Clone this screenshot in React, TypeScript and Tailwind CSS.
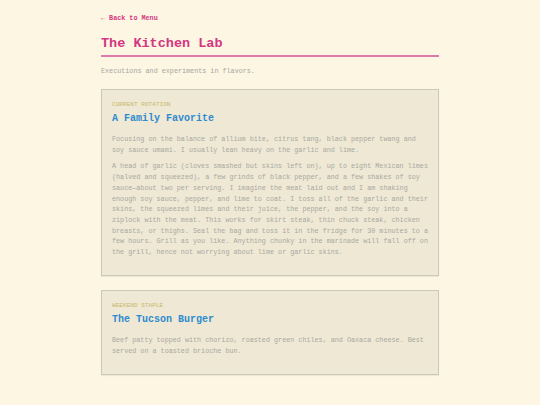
import React from 'react';

interface Recipe {
  tag: string;
  title: string;
  paragraphs: string[];
}

const recipes: Recipe[] = [
  {
    tag: 'Current Rotation',
    title: 'A Family Favorite',
    paragraphs: [
      'Focusing on the balance of allium bite, citrus tang, black pepper twang and soy sauce umami. I usually lean heavy on the garlic and lime.',
      'A head of garlic (cloves smashed but skins left on), up to eight Mexican limes (halved and squeezed), a few grinds of black pepper, and a few shakes of soy sauce\u2014about two per serving. I imagine the meat laid out and I am shaking enough soy sauce, pepper, and lime to coat. I toss all of the garlic and their skins, the squeezed limes and their juice, the pepper, and the soy into a ziplock with the meat. This works for skirt steak, thin chuck steak, chicken breasts, or thighs. Seal the bag and toss it in the fridge for 30 minutes to a few hours. Grill as you like. Anything chunky in the marinade will fall off on the grill, hence not worrying about lime or garlic skins.',
    ],
  },
  {
    tag: 'Weekend Staple',
    title: 'The Tucson Burger',
    paragraphs: [
      'Beef patty topped with chorizo, roasted green chiles, and Oaxaca cheese. Best served on a toasted brioche bun.',
    ],
  },
];

const RecipeCard: React.FC<{ recipe: Recipe }> = ({ recipe }) => (
  <section className="bg-[#eee8d5] border border-[#cbc8b6] shadow-[0_1px_1px_rgba(0,0,0,0.06)] pt-[10px] pb-[11px] pl-[10px] pr-[9px]">
    <div className="text-[6.1px] leading-[9px] uppercase text-[#c9b86a]">
      {recipe.tag}
    </div>
    <h2 className="mt-[3.5px] text-[10px] leading-[14px] font-bold text-[#2f8bcf]">
      {recipe.title}
    </h2>
    <div className="mt-[8px]">
      {recipe.paragraphs.map((p, i) => (
        <p key={i} className="mb-[6px] text-[6.75px] leading-[10.7px] text-[#aaa9a0]">
          {p}
        </p>
      ))}
    </div>
  </section>
);

export default function App() {
  return (
    <div
      className="min-h-screen bg-[#fdf6e3]"
      style={{ fontFamily: '"Liberation Mono", "Courier New", monospace' }}
    >
      <div className="w-[338px] mx-auto pt-[13px]">
        <a href="#" className="block text-[6.75px] leading-[10px] font-bold text-[#d33682]">
          ← Back to Menu
        </a>
        <h1 className="mt-[12px] pb-[2px] text-[13.5px] leading-[18px] font-bold text-[#d33682] border-b-2 border-[#dc79ad]">
          The Kitchen Lab
        </h1>
        <p className="mt-[9px] text-[6.75px] leading-[10px] text-[#a6a79e]">
          Executions and experiments in flavors.
        </p>
        <div className="mt-[12.5px] flex flex-col gap-[14px]">
          {recipes.map((r) => (
            <RecipeCard key={r.title} recipe={r} />
          ))}
        </div>
      </div>
    </div>
  );
}
